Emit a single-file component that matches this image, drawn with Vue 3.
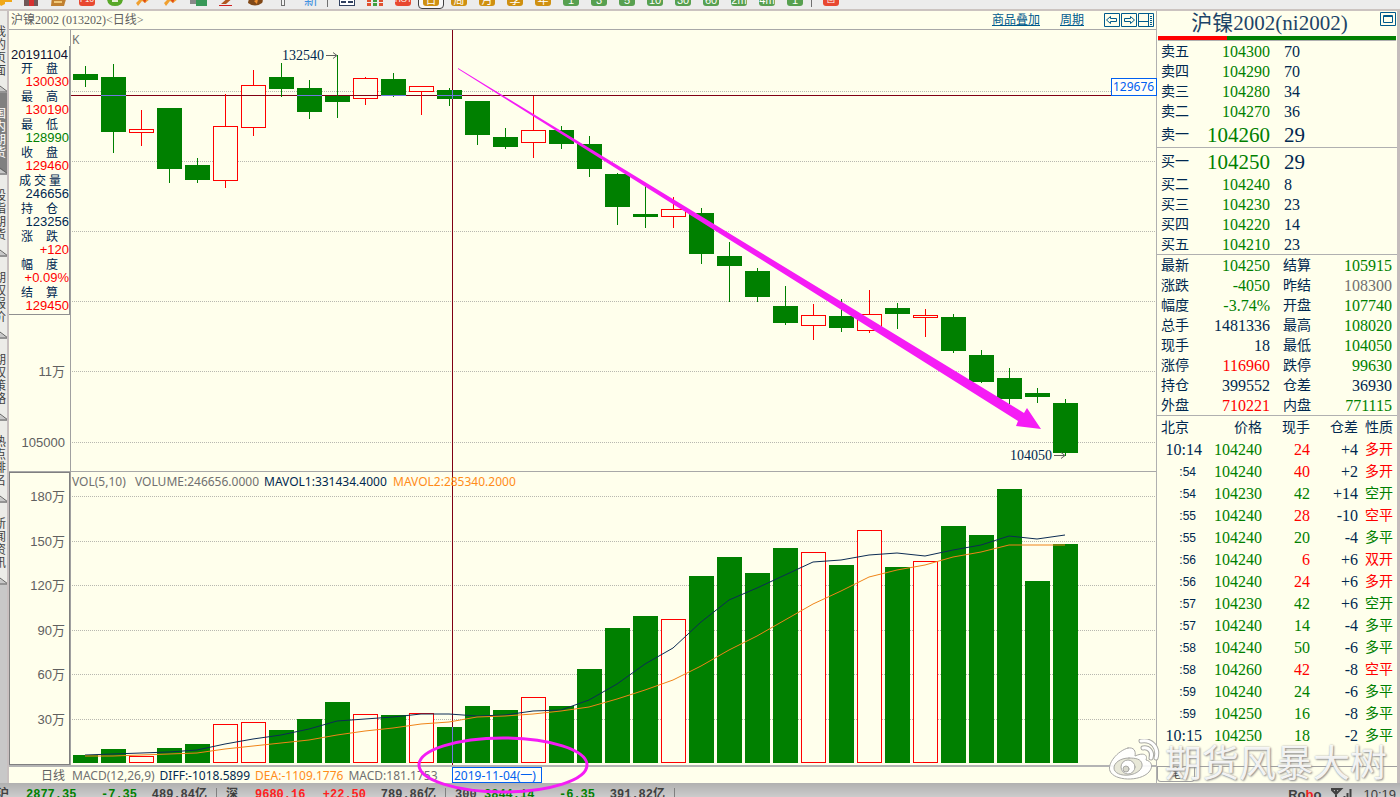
<template>
  <div class="terminal">
    <div class="toolbar">
      <template v-for="(tool, i) in tools" :key="i">
        <span v-if="tool.kind === 'sep'" class="tool-sep"></span>
        <button v-else type="button" class="tool" :class="{ active: tool.active }" :aria-label="tool.name || tool.label">
          <span v-if="tool.label" class="tool-badge" :class="tool.kind">{{ tool.label }}</span>
          <svg v-else width="18" height="16" viewBox="0 0 18 16">
            <path v-for="(p, k) in tool.paths" :key="k" :d="p[0]" :fill="p[1]" />
          </svg>
        </button>
      </template>
    </div>

    <div class="workspace">
      <nav class="side-tabs">
        <button v-for="tab in tabs" :key="tab.text" type="button" class="side-tab" :class="{ current: tab.current }">
          <span>{{ tab.text }}</span>
          <svg width="8" height="8" viewBox="0 0 8 8"><path d="M0 2 L8 7 V8 H0 Z" fill="#c8c8c8" /><path d="M0 1 L8 7 M0 7 H8" stroke="#606060" fill="none" /></svg>
        </button>
      </nav>

      <main class="chart-panel">
        <header class="chart-head">
          <span class="chart-name">沪镍2002 (013202)&lt;日线&gt;</span>
          <a href="#overlay">商品叠加</a>
          <a href="#period">周期</a>
          <div class="head-buttons">
            <button type="button" aria-label="向左">
              <svg width="16" height="14" viewBox="0 0 16 14"><path d="M.5 .5h15v13H.5zM2.500 7l4-3.500v2h6v3h-6v2z" /></svg>
            </button>
            <button type="button" aria-label="向右">
              <svg width="16" height="14" viewBox="0 0 16 14"><path d="M.5 .5h15v13H.5zM13.500 7l-4-3.500v2h-6v3h6v2z" /></svg>
            </button>
            <button type="button" aria-label="布局">
              <svg width="16" height="14" viewBox="0 0 16 14"><path d="M.5 .5h15v13H.5zM.5 8.500h10M10.500 .5v13M12 3.500h2M12 5.500h2M12 7.500h2M12 9.500h2M12 11.500h2" /></svg>
            </button>
          </div>
        </header>

        <div class="plot">
          <svg class="plot-svg" viewBox="9 30 1147 735">
            <g shape-rendering="crispEdges">
              <line v-for="y in gridLines" :key="y" x1="72" x2="1156" :y1="y + 0.5" :y2="y + 0.5" class="grid-line" />
              <rect x="9" y="471" width="1147" height="1" fill="#a8a8a8" />
              <rect x="70" y="30" width="1" height="735" fill="#a0a0a0" />
              <path d="M9.500 472.500H69.500V764.500H9.500Z" fill="none" stroke="#808080" />

              <rect x="71" :y="crossY" width="1085" height="1" class="cross" />
              <rect :x="crossX" y="30" width="1" height="735" class="cross" />

              <g v-for="(c, i) in candles" :key="'c' + i">
                <rect :x="barX(i) + 12" :y="c[2]" width="1" :height="c[3] - c[2]" :fill="color(c)" />
                <rect :x="barX(i)" :y="c[0]" width="25" :height="c[1] - c[0]" :fill="color(c)" />
                <rect v-if="c[4]" :x="barX(i) + 1" :y="c[0] + 1" width="23" :height="c[1] - c[0] - 2" class="hollow" />
                <rect v-if="c[0] <= crossY && c[1] >= crossY" :x="barX(i)" :y="crossY" width="25" height="1" :class="c[4] ? 'cross' : 'cross-inverse'" />
              </g>
              <rect :x="crossX" y="90" width="1" height="9" class="cross-inverse" />

              <g v-for="(v, i) in volumes" :key="'v' + i">
                <rect :x="barX(i)" :y="v" width="25" :height="763 - v" :fill="color(candles[i])" />
                <rect v-if="candles[i][4]" :x="barX(i) + 1" :y="v + 1" width="23" :height="761 - v" class="hollow" />
              </g>
              <rect :x="crossX" y="727" width="1" height="36" class="cross-inverse" />
            </g>

            <polyline :points="linePoints(mavol1)" class="ma" stroke="#0c2c54" />
            <polyline :points="linePoints(mavol2)" class="ma" stroke="#f08418" />

            <g class="axis">
              <text v-for="a in axisLabels" :key="a.text" x="65" :y="a.y">{{ a.text }}</text>
            </g>
            <text x="72" y="44" class="study" fill="#707070">K</text>
            <text x="72" y="486" class="study" fill="#707070">VOL(5,10)</text>
            <text x="135" y="486" class="study" fill="#707070">VOLUME:246656.0000</text>
            <text x="264" y="486" class="study" fill="#002850">MAVOL1:331434.4000</text>
            <text x="393" y="486" class="study" fill="#ff8c1a">MAVOL2:285340.2000</text>

            <text x="282" y="60" class="mark">132540</text>
            <path d="M326 55.500h10M333 52.500l4 3l-4 3" class="mark-arrow" />
            <text x="1010" y="460" class="mark">104050</text>
            <path d="M1054 455.500h10M1061 452.500l4 3l-4 3" class="mark-arrow" />

            <rect x="1111.500" y="78.500" width="45" height="17" class="tag" />
            <text x="1113" y="91" class="study tag-text">129676</text>
            <rect x="452.500" y="767.500" width="89" height="15" class="tag" />
            <text x="454" y="780" class="study tag-text">2019-11-04(一)</text>

            <polygon points="458,68 1024,413 1027,408 1041,429 1016,426 1018,421 458,69" fill="#f51cf5" />
            <ellipse cx="503" cy="765" rx="84" ry="27" fill="none" stroke="#f51cf5" stroke-width="3" />
          </svg>

          <dl class="readout">
            <dt class="date">20191104</dt>
            <template v-for="r in readout" :key="r[0]">
              <dt><span v-for="ch in r[0]" :key="ch">{{ ch }}</span></dt>
              <dd :class="r[2]">{{ r[1] }}</dd>
            </template>
          </dl>
        </div>

        <div class="macd-row">
          <span class="macd-period">日线</span>
          <span class="gray">MACD(12,26,9)</span>
          <span class="navy">DIFF:-1018.5899</span>
          <span class="orange">DEA:-1109.1776</span>
          <span class="gray">MACD:181.1753</span>
        </div>
      </main>

      <aside class="quote-panel">
        <div class="quote-title">
          <h1>沪镍2002(ni2002)</h1>
          <button type="button" aria-label="窗口">
            <svg width="16" height="14" viewBox="0 0 16 14"><path d="M.5 .5h15v13H.5zM3.500 3.500h9v7h-9zM3.500 4.500h9" /></svg>
          </button>
        </div>
        <div class="ratio"><span></span></div>

        <table class="book">
          <tbody>
            <tr v-for="row in book" :key="row[0]" :class="{ best: row[3], split: row[0] === '卖一' }">
              <th scope="row">{{ row[0] }}</th>
              <td class="green">{{ row[1] }}</td>
              <td>{{ row[2] }}</td>
            </tr>
          </tbody>
        </table>

        <table class="summary">
          <tbody>
            <tr v-for="row in summary" :key="row[0]">
              <th scope="row">{{ row[0] }}</th>
              <td :class="row[2]">{{ row[1] }}</td>
              <th scope="row">{{ row[3] }}</th>
              <td :class="row[5]">{{ row[4] }}</td>
            </tr>
          </tbody>
        </table>

        <table class="ticks">
          <thead>
            <tr>
              <th>北京</th>
              <th>价格</th>
              <th>现手</th>
              <th>仓差</th>
              <th>性质</th>
            </tr>
          </thead>
          <tbody>
            <tr v-for="(t, i) in ticks" :key="i">
              <td :class="{ short: t[0].length === 3 }">{{ t[0] }}</td>
              <td class="green">{{ t[1] }}</td>
              <td :class="tickColor(t[4])">{{ t[2] }}</td>
              <td>{{ t[3] }}</td>
              <td :class="tickColor(t[4])">{{ t[4] }}</td>
            </tr>
          </tbody>
        </table>

        <div class="quote-tabs">
          <button type="button">笔</button>
        </div>

        <div class="watermark">
          <svg width="54" height="44" viewBox="0 0 54 44">
            <g fill="none" stroke="#a8a8a4" stroke-linecap="round">
              <path d="M21 9C10 12 0 25 3 32c4 10 30 11 39 1c5-6 2-11-3-12c2-5-2-8-11-4c1-5-1-9-7-8z" fill="#fff" fill-opacity=".9" />
              <path d="M22 19c-9 0-15 5-15 10s7 8 15 7s14-6 13-11s-6-6-13-6z" fill="#e8e8d8" />
              <circle cx="21" cy="28" r="7" fill="#fff" />
              <circle cx="19" cy="30" r="3" fill="#d8d8cc" />
              <path d="M36 9c6-1 10 4 8 10" stroke-width="5" />
              <path d="M36 9c6-1 10 4 8 10" stroke="#fff" stroke-width="3" />
              <path d="M34 2c11-2 18 7 15 17" stroke-width="5" />
              <path d="M34 2c11-2 18 7 15 17" stroke="#fff" stroke-width="3" />
            </g>
          </svg>
          <span>期货风暴大树</span>
        </div>
      </aside>
    </div>

    <footer class="status">
      <div v-for="s in indices" :key="s.name" class="index" :class="s.dir">
        <span class="index-name">{{ s.name }}</span>
        <b>{{ s.last }}</b>
        <b class="change">{{ s.change }}</b>
        <span class="amount">{{ s.amount }}</span>
      </div>
      <div class="status-right">
        <span class="brand">Ro<i>b</i>o</span>
        <svg width="22" height="12" viewBox="0 0 22 12"><path d="M0 1h10L5 6zM5 1v10M13.500 12V8M16.500 12V5M19.500 12V1" fill="none" stroke="#404040" stroke-width="2" /></svg>
        <span>10:19</span>
      </div>
    </footer>
  </div>
</template>

<script setup>
const key = 'M2 13 L10 5 L16 9 L11 13 L8 11 L4 16 Z'

const tools = [
  { name: '后退', paths: [['M1 8 L8 0 V4 H18 V12 H11 V14 L7 16 Z', '#f0a818']] },
  { name: '首页', paths: [['M2 8 H16 V16 H2 Z', '#705858'], ['M7 10 H12 V16 H7 Z', '#d83030']] },
  { name: '打开', paths: [['M2 6 H17 L14 16 H1 Z', '#c08030'], ['M4 11 H12 V13 H4 Z', '#f0c878']] },
  { kind: 'red', label: 'F10' },
  { name: '刷新', paths: [['M1 8 H17 Q17 16 9 16 Q1 16 1 8 Z', '#58a828'], ['M6 9 H12 V12 H6 Z', '#e8f0d8']] },
  { name: '放大', paths: [[key, '#f0a030'], ['M8 9 L13 8 L11 13 Z', '#e04818']] },
  { name: '缩小', paths: [[key, '#f0a030'], ['M8 9 L13 8 L11 13 Z', '#e04818']] },
  { name: '叠加', paths: [['M0 7 H9 V14 H0 Z', '#888888'], ['M6 10 H17 V16 H6 Z', '#389858']] },
  { name: '画线', paths: [['M12 6 L17 6 L8 14 L3 14 Z', '#b05820'], ['M1 15 H14 V16 H1 Z', '#d02020']] },
  { name: '颜色', paths: [['M2 13 Q3 5 10 5 Q19 8 16 13 Q9 18 2 13 Z', '#804818'], ['M8 11 L12 9 L11 14 Z', '#f09030']] },
  { name: '文字', paths: [['M7 3 H11 V16 H7 Z', '#707070'], ['M8 3 H10 V15 H8 Z', '#f4f4f4']] },
  { kind: 'plain', label: '新' },
  { kind: 'sep' },
  { name: '报价', paths: [['M1 4 H17 V16 H1 Z', '#304060'], ['M2 5 H16 V15 H2 Z', '#fff'], ['M3 11 H8 V13 H3 Z M10 11 H15 V13 H10 Z', '#304060']] },
  { name: '分时', paths: [['M1 5 H5 V16 H1 Z M13 5 H17 V16 H13 Z', '#e05030'], ['M7 8 H11 V16 H7 Z', '#40a040'], ['M1 12 H17 V13 H1 Z', '#ececec']] },
  { kind: 'red', label: 'HOT' },
  { kind: 'gold', label: '日', active: true },
  { kind: 'gold', label: '周' },
  { kind: 'gold', label: '月' },
  { kind: 'gold', label: '季' },
  { kind: 'gold', label: '年' },
  ...['1', '3', '5', '10', '30', '60', '2m', '4m', '1'].map((label) => ({ kind: 'leaf', label })),
  { kind: 'sep' },
  { kind: 'red', label: '回' }
]

const tabs = [
  { text: '我的页面' },
  { text: '国内期货', current: true },
  { text: '股指期货' },
  { text: '期权报价' },
  { text: '期权策略' },
  { text: '热点排名' },
  { text: '新闻资讯' }
]

const crossX = 452
const crossY = 95
const gridLines = [91, 161, 231, 301, 371, 442, 496, 541, 585, 630, 674, 719]

// body top, body bottom, wick top, wick bottom, rising
const candles = [
  [74, 80, 66, 87, 0], [77, 132, 64, 153, 0], [129, 133, 110, 146, 1], [108, 169, 108, 183, 0],
  [165, 180, 158, 183, 0], [126, 181, 94, 188, 1], [85, 128, 70, 136, 1], [77, 89, 63, 97, 0],
  [88, 112, 80, 119, 0], [96, 102, 55, 118, 0], [78, 99, 77, 105, 1], [79, 96, 73, 97, 0],
  [86, 92, 86, 115, 1], [90, 99, 88, 106, 0], [101, 135, 101, 145, 0], [137, 147, 128, 149, 0],
  [130, 143, 96, 158, 1], [130, 144, 126, 149, 0], [144, 169, 136, 177, 0], [174, 207, 173, 225, 0],
  [214, 217, 186, 228, 0], [209, 217, 197, 228, 1], [213, 254, 208, 264, 0], [256, 266, 242, 302, 0],
  [271, 297, 268, 302, 0], [306, 323, 286, 325, 0], [315, 326, 304, 340, 1], [316, 328, 299, 332, 0],
  [314, 331, 290, 333, 1], [308, 314, 303, 329, 0], [315, 318, 309, 337, 1], [317, 351, 314, 353, 0],
  [355, 382, 350, 383, 0], [378, 399, 368, 404, 0], [393, 397, 388, 403, 0], [403, 453, 399, 456, 0]
]
const volumes = [
  755, 749, 756, 748, 744, 724, 722, 730, 719, 702, 714, 715, 713, 727, 706, 710, 697, 706,
  669, 628, 616, 619, 576, 557, 573, 548, 552, 565, 530, 567, 561, 526, 535, 489, 581, 544
]
const mavol1 = [
  755, 754, 753, 752, 750, 744, 739, 735, 729, 721, 719, 717, 714, 714, 716, 715, 711, 710,
  700, 684, 664, 648, 622, 600, 588, 575, 562, 560, 555, 553, 556, 550, 545, 536, 539, 535
]
const mavol2 = [
  756, 756, 755, 754, 753, 749, 746, 743, 740, 735, 731, 728, 724, 722, 717, 716, 714, 711,
  707, 699, 690, 680, 666, 650, 636, 620, 604, 591, 577, 570, 565, 557, 552, 545, 545, 545
]

const axisLabels = [
  { text: '11万', y: 376 },
  { text: '105000', y: 447 },
  { text: '180万', y: 501 },
  { text: '150万', y: 546 },
  { text: '120万', y: 590 },
  { text: '90万', y: 635 },
  { text: '60万', y: 679 },
  { text: '30万', y: 724 }
]

const readout = [
  ['开盘', '130030', 'red'],
  ['最高', '130190', 'red'],
  ['最低', '128990', 'green'],
  ['收盘', '129460', 'red'],
  ['成交量', '246656', 'navy'],
  ['持仓', '123256', 'navy'],
  ['涨跌', '+120', 'red'],
  ['幅度', '+0.09%', 'red'],
  ['结算', '129450', 'red']
]

const book = [
  ['卖五', '104300', '70'],
  ['卖四', '104290', '70'],
  ['卖三', '104280', '34'],
  ['卖二', '104270', '36'],
  ['卖一', '104260', '29', true],
  ['买一', '104250', '29', true],
  ['买二', '104240', '8'],
  ['买三', '104230', '23'],
  ['买四', '104220', '14'],
  ['买五', '104210', '23']
]

const summary = [
  ['最新', '104250', 'green', '结算', '105915', 'green'],
  ['涨跌', '-4050', 'green', '昨结', '108300', 'gray'],
  ['幅度', '-3.74%', 'green', '开盘', '107740', 'green'],
  ['总手', '1481336', 'navy', '最高', '108020', 'green'],
  ['现手', '18', 'navy', '最低', '104050', 'green'],
  ['涨停', '116960', 'red', '跌停', '99630', 'green'],
  ['持仓', '399552', 'navy', '仓差', '36930', 'navy'],
  ['外盘', '710221', 'red', '内盘', '771115', 'green']
]

const ticks = [
  ['10:14', '104240', '24', '+4', '多开'],
  [':54', '104240', '40', '+2', '多开'],
  [':54', '104230', '42', '+14', '空开'],
  [':55', '104240', '28', '-10', '空平'],
  [':55', '104240', '20', '-4', '多平'],
  [':56', '104240', '6', '+6', '双开'],
  [':56', '104240', '24', '+6', '多开'],
  [':57', '104230', '42', '+6', '空开'],
  [':57', '104240', '14', '-4', '多平'],
  [':58', '104240', '50', '-6', '多平'],
  [':58', '104260', '42', '-8', '空平'],
  [':59', '104240', '24', '-6', '多平'],
  [':59', '104250', '16', '-8', '多平'],
  ['10:15', '104250', '18', '-2', '多平']
]

const indices = [
  { name: '沪', last: '2877.35', change: '-7.35', amount: '489.84亿', dir: 'down' },
  { name: '深', last: '9680.16', change: '+22.50', amount: '789.86亿', dir: 'up' },
  { name: '300', last: '3844.14', change: '-6.35', amount: '391.82亿', dir: 'down' }
]

const barX = (i) => 73 + i * 28
const color = (c) => (c[4] ? '#ff0000' : '#008000')
const linePoints = (values) => values.map((y, i) => `${barX(i) + 12},${y}`).join(' ')
const tickColor = (kind) => (['多开', '空平', '双开'].includes(kind) ? 'red' : 'green')
</script>

<style>
body {
  margin: 0;
}
</style>

<style scoped>
.terminal {
  display: flex;
  flex-direction: column;
  min-height: 100vh;
  overflow: hidden;
  background: #ffffec;
  color: #002850;
  font-family: "Liberation Sans", "Noto Sans CJK SC", sans-serif;
  font-size: 12px;
}

button {
  padding: 0;
  border: 0;
  background: none;
  color: inherit;
  font: inherit;
}

svg {
  display: block;
  flex: none;
}

.red {
  color: #ff0000;
}

.green {
  color: #008000;
}

.navy {
  color: #002850;
}

.orange {
  color: #ff8c1a;
}

.gray {
  color: #707070;
}

.toolbar {
  display: flex;
  align-items: flex-end;
  height: 9px;
  margin-left: -11px;
  background: #ececec;
  border-bottom: 2px solid #cbc3c0;
  overflow: hidden;
}

.tool {
  display: flex;
  justify-content: center;
  flex: none;
  width: 28px;
  height: 18px;
  padding-bottom: 3px;
  box-sizing: border-box;
  align-items: flex-end;
}

.tool.active {
  width: 26px;
  margin: 0 1px;
  border: 1px solid #404040;
  border-radius: 4px;
  padding-bottom: 2px;
  background: #f8f8f8;
}

.tool-badge {
  width: 16px;
  height: 15px;
  border-radius: 3px;
  color: #fff;
  font-size: 11px;
  line-height: 18px;
  text-align: center;
  overflow: hidden;
}

.tool-badge.red {
  background: #e84830;
  font-size: 8px;
}

.tool-badge.gold {
  background: #cf9010;
}

.tool-badge.leaf {
  background: #58a050;
}

.tool-badge.plain {
  color: #4090e0;
  font-size: 14px;
}

.tool-sep {
  flex: none;
  width: 1px;
  height: 18px;
  margin: 0 5px 2px 2px;
  background: #707070;
}

.workspace {
  display: flex;
  flex: 1;
}

.side-tabs {
  flex: none;
  width: 7px;
  background: #c8c8c8;
  border-right: 2px solid #c8c0c0;
  overflow: hidden;
}

.side-tab {
  position: relative;
  display: flex;
  width: 7px;
  height: 82px;
  align-items: center;
  background: #ecece8;
  color: #404040;
  overflow: hidden;
}

.side-tab span {
  flex: none;
  width: 12px;
  margin-left: -6px;
  line-height: 13px;
  white-space: normal;
  word-break: break-all;
}

.side-tab svg {
  position: absolute;
  left: 0;
  bottom: 0;
}

.side-tab.current {
  background: #808080;
  color: #fff;
}

.chart-panel {
  flex: 1;
  min-width: 0;
}

.chart-head {
  display: flex;
  align-items: center;
  gap: 20px;
  height: 18px;
  padding: 0 2px;
  border-bottom: 1px solid #a8a8a8;
  line-height: 18px;
}

.chart-name {
  flex: 1;
  color: #606060;
  font-family: "Liberation Serif", "Noto Sans CJK SC", serif;
}

.chart-head a {
  color: #005a8c;
}

.head-buttons {
  display: flex;
  gap: 1px;
}

.head-buttons path,
.quote-title path {
  fill: none;
  stroke: #005a8c;
}

.plot {
  position: relative;
  z-index: 1;
  border-bottom: 2px solid #b4b4b4;
}

.plot-svg {
  width: 100%;
  height: auto;
  overflow: visible;
  pointer-events: none;
}

.grid-line {
  stroke: #b8b8b0;
  stroke-dasharray: 1 1;
}

.cross {
  fill: #800014;
}

.cross-inverse {
  fill: #7078e0;
}

.hollow {
  fill: #ffffec;
}

.ma {
  fill: none;
}

.axis text {
  fill: #606060;
  font-size: 13px;
  text-anchor: end;
}

.study {
  font-family: "Noto Sans", "Noto Sans CJK SC", sans-serif;
  font-size: 12px;
}

.mark {
  fill: #002850;
  font-family: "Liberation Serif", serif;
  font-size: 14px;
}

.mark-arrow {
  fill: none;
  stroke: #606060;
}

.tag {
  fill: #fffff8;
  stroke: #0060f0;
}

.tag-text {
  fill: #0060f0;
}

.readout {
  position: absolute;
  top: 16px;
  left: 0;
  width: 60px;
  margin: 0;
  border-right: 1px solid #909090;
  border-bottom: 1px solid #909090;
  background: #ffffec;
  line-height: 14px;
}

.readout dt {
  display: flex;
  justify-content: space-between;
  height: 14px;
  padding: 0 11px 0 12px;
}

.readout dt:has(span:nth-child(3)) {
  padding: 0 8px 0 10px;
}

.readout .date {
  padding: 2px 0 0 2px;
  color: #101030;
  font-size: 13px;
}

.readout dd {
  height: 14px;
  margin: 0;
  text-align: right;
  font-size: 13px;
  line-height: 12px;
}

.macd-row {
  display: flex;
  gap: 5px;
  height: 16px;
  font-family: "Noto Sans", "Noto Sans CJK SC", sans-serif;
  line-height: 18px;
}

.macd-period {
  width: 56px;
  margin-right: 2px;
  color: #606060;
  text-align: right;
}

.quote-panel {
  position: relative;
  display: flex;
  flex: none;
  flex-direction: column;
  width: 240px;
  border-left: 1px solid #b0b0b0;
  border-right: 3px solid #c4bcbc;
  font-family: "Liberation Serif", "Noto Sans CJK SC", serif;
}

.quote-title {
  display: flex;
  height: 25px;
  padding-right: 1px;
}

.quote-title h1 {
  flex: 1;
  margin: 0;
  padding-left: 2px;
  color: #1c4468;
  font-size: 21px;
  font-weight: 400;
  line-height: 25px;
  text-align: center;
}

.quote-title button {
  height: 16px;
}

.ratio {
  height: 4px;
  margin: 0 1px;
  background: #008000;
  border-bottom: 1px solid #b0b0b0;
}

.ratio span {
  display: block;
  width: 29%;
  height: 4px;
  background: #ff0000;
}

table {
  width: 100%;
  border-collapse: separate;
  border-spacing: 0;
  table-layout: fixed;
}

th,
td {
  height: 20px;
  padding: 2px 0 0;
  font-size: 16px;
  font-weight: 400;
  line-height: 18px;
  text-align: right;
  white-space: nowrap;
  box-sizing: border-box;
}

th {
  font-size: 14px;
  text-align: left;
}

.book,
.summary {
  border-bottom: 1px solid #b0b0b0;
}

.book th,
.summary th:first-child {
  width: 40px;
  padding-left: 4px;
}

.book td:nth-child(2),
.summary td:nth-child(2) {
  width: 73px;
}

.book td:last-child {
  padding-left: 14px;
  text-align: left;
}

.book .best th,
.book .best td {
  height: 26px;
  line-height: 24px;
}

.book .best td {
  font-size: 21px;
}

.book .split th,
.book .split td {
  height: 27px;
  border-bottom: 1px solid #b0b0b0;
}

.summary th:nth-child(3) {
  padding-left: 13px;
}

.summary td:last-child {
  padding-right: 5px;
}

.ticks th,
.ticks td {
  width: 48px;
  height: 22px;
  line-height: 20px;
  text-align: right;
}

.ticks th:first-child {
  width: 45px;
  padding-left: 4px;
  text-align: left;
}

.ticks th:nth-child(2) {
  width: 60px;
}

.ticks th:last-child,
.ticks td:last-child {
  width: auto;
  padding-right: 4px;
  font-size: 14px;
}

.ticks td.short {
  padding-right: 6px;
  font-family: "Liberation Sans", sans-serif;
  font-size: 12px;
}

.quote-tabs {
  display: flex;
  height: 16px;
  margin-top: auto;
  border-top: 1px solid #a0a0a0;
}

.quote-tabs button {
  width: 38px;
  height: 15px;
  border: 1px solid #a0a0a0;
  border-top: 0;
  border-radius: 0 0 4px 4px;
  color: #404040;
  line-height: 14px;
}

.watermark {
  position: absolute;
  z-index: 2;
  right: 10px;
  bottom: 0;
  display: flex;
  align-items: center;
  gap: 4px;
  color: rgba(255, 255, 255, 0.9);
  font-family: "Noto Sans CJK SC", sans-serif;
  font-size: 37px;
  line-height: 42px;
  white-space: nowrap;
  text-shadow: 1px 1px 2px #909090, 0 0 2px #b0b0b0;
  pointer-events: none;
}

.status {
  display: flex;
  height: 14px;
  box-sizing: border-box;
  padding-top: 5px;
  overflow: hidden;
  background: linear-gradient(#b0b0b0, #cccccc);
  color: #404040;
  font-family: "Liberation Mono", "Noto Sans CJK SC", monospace;
  font-weight: 700;
  line-height: 14px;
  white-space: nowrap;
}

.index {
  display: flex;
  width: 220px;
  margin-right: 9px;
}

.index-name {
  width: 29px;
}

.index:first-child {
  margin-left: -3px;
}

.index b {
  width: 50px;
}

.index .change {
  width: 61px;
  text-align: right;
}

.amount {
  flex: 1;
  padding-right: 9px;
  border-right: 1px solid #808080;
  text-align: right;
}

.index.down b {
  color: #008000;
}

.index.up b {
  color: #ff2020;
}

.status-right {
  display: flex;
  gap: 10px;
  margin-left: auto;
  padding-right: 4px;
  font-family: "Liberation Sans", sans-serif;
  font-size: 13px;
  font-weight: 400;
}

.brand {
  font-weight: 700;
}

.brand i {
  color: #f02020;
  font-style: normal;
}
</style>
